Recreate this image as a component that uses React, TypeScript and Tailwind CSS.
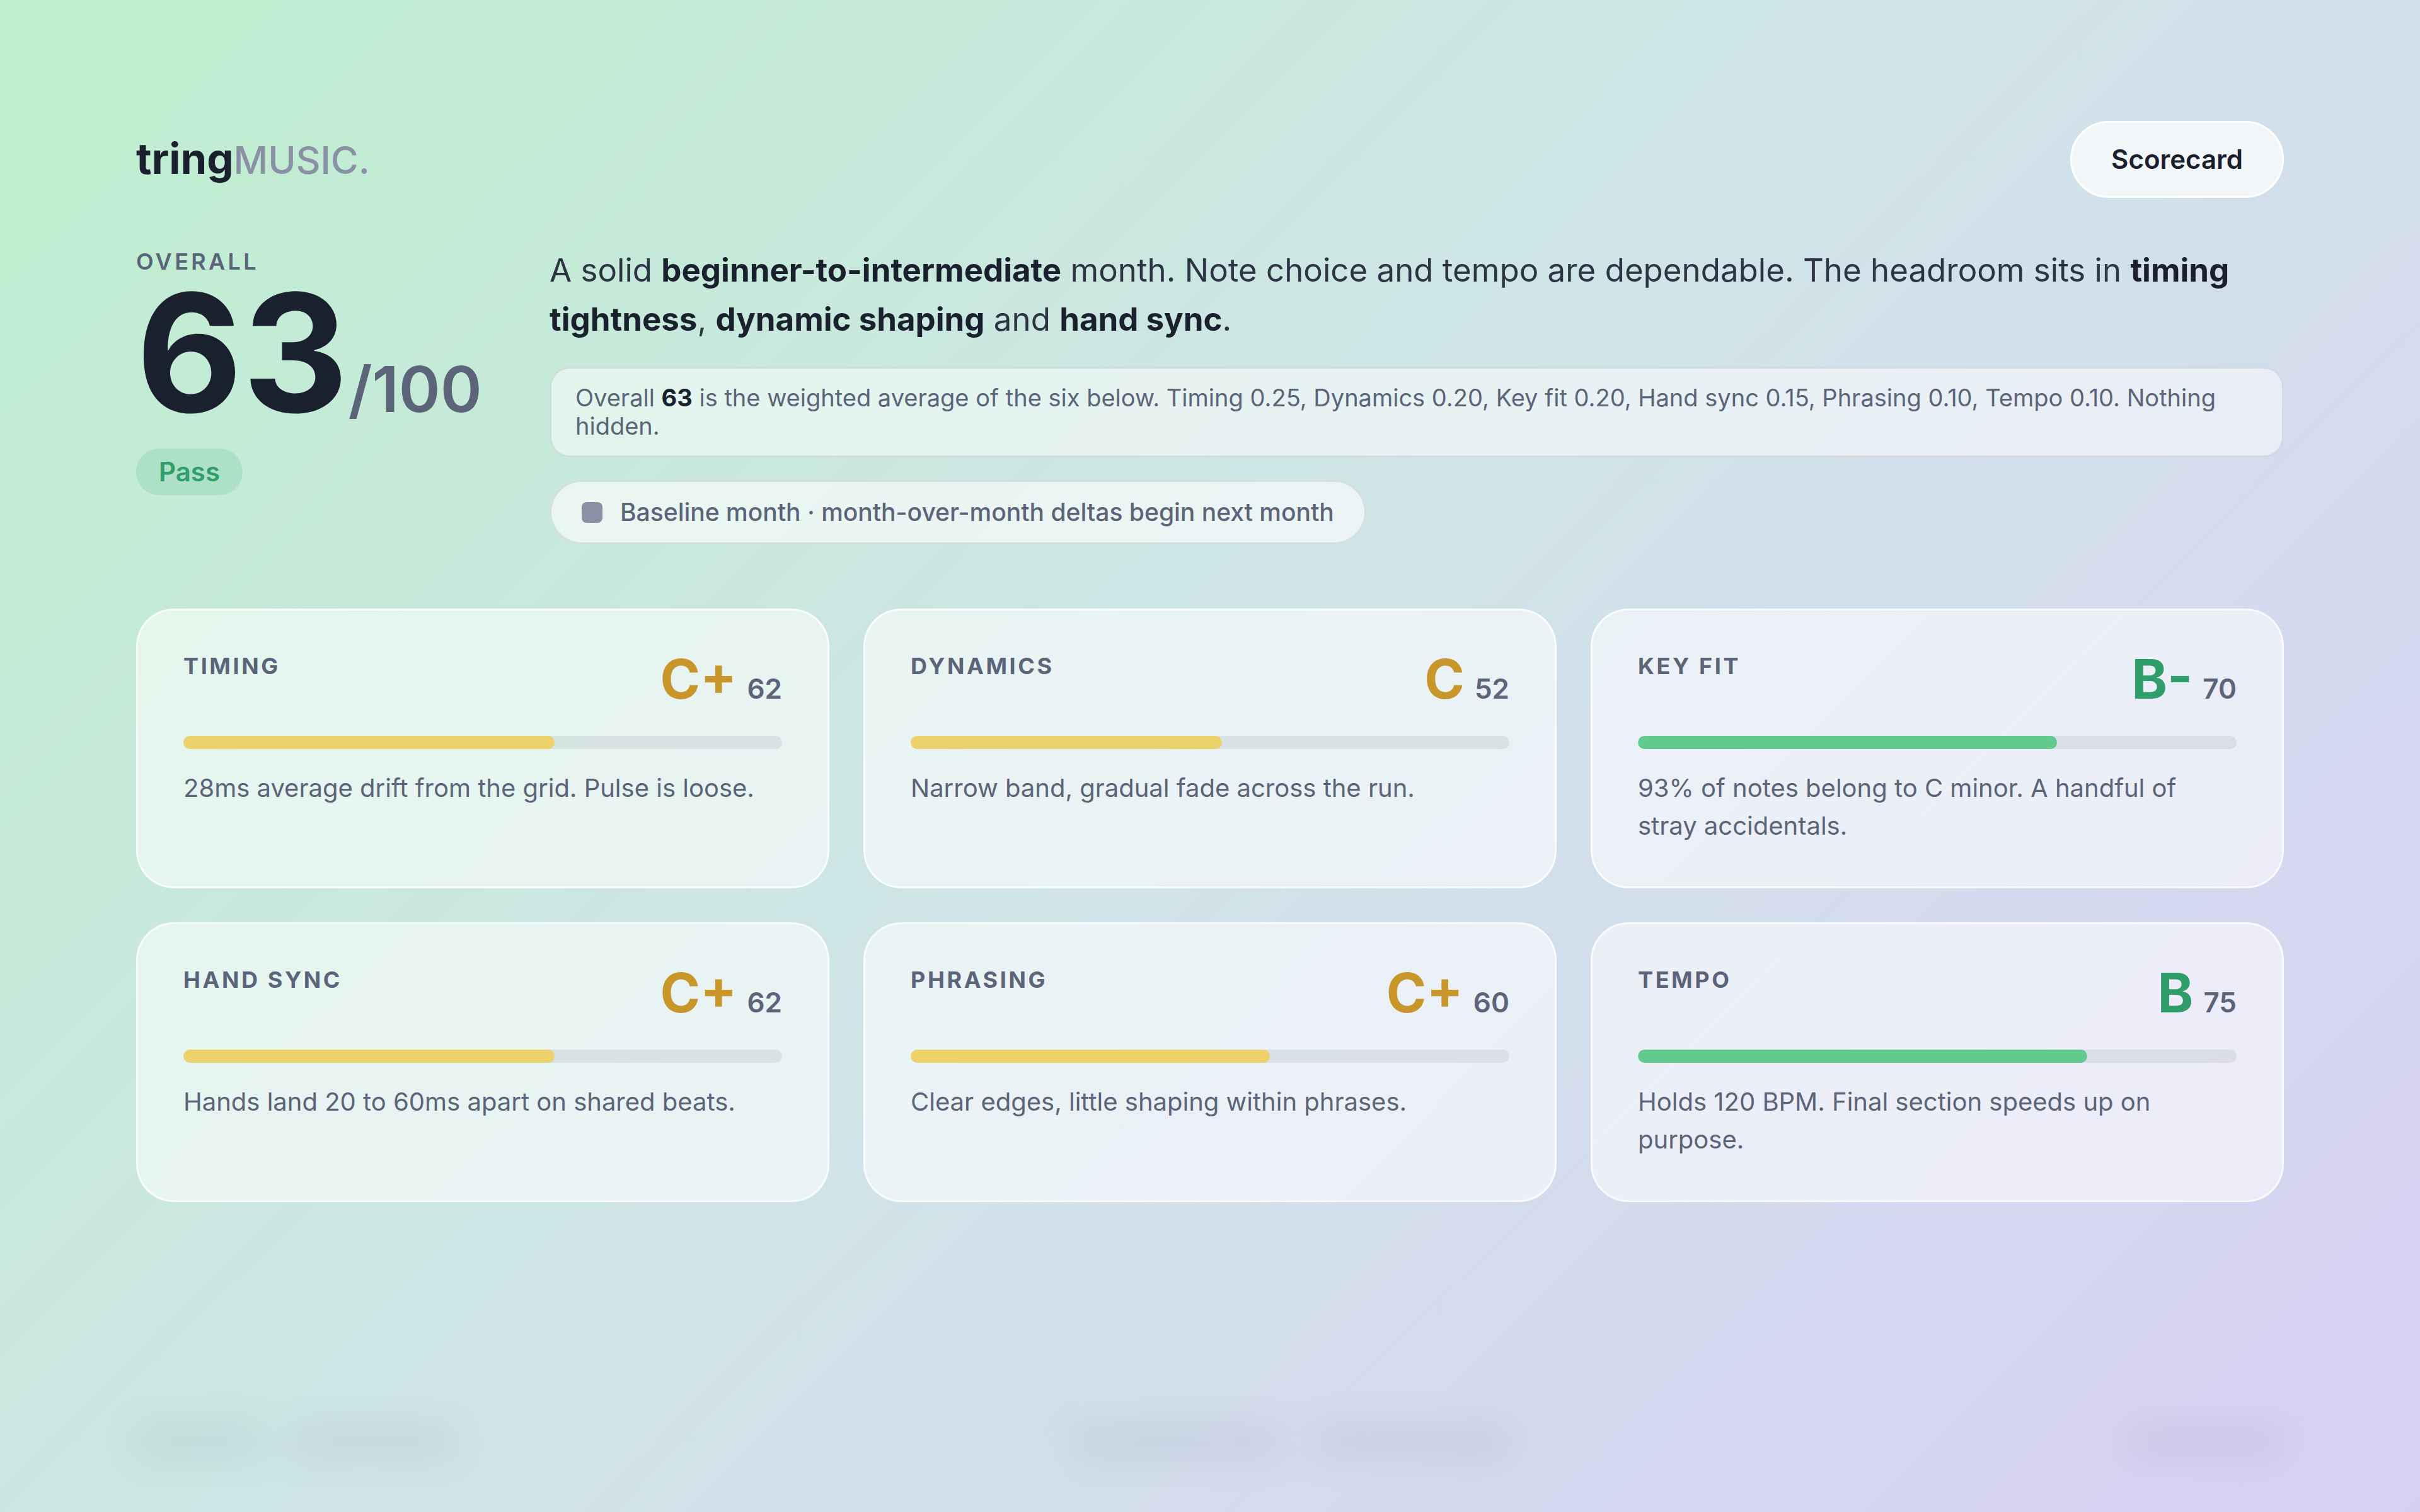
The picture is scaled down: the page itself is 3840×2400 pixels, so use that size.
import { clsx } from 'clsx';

type Tone = 'amber' | 'green';

const metrics: { label: string; grade: string; score: number; tone: Tone; note: string }[] = [
  { label: 'Timing', grade: 'C+', score: 62, tone: 'amber', note: '28ms average drift from the grid. Pulse is loose.' },
  { label: 'Dynamics', grade: 'C', score: 52, tone: 'amber', note: 'Narrow band, gradual fade across the run.' },
  { label: 'Key fit', grade: 'B-', score: 70, tone: 'green', note: '93% of notes belong to C minor. A handful of stray accidentals.' },
  { label: 'Hand sync', grade: 'C+', score: 62, tone: 'amber', note: 'Hands land 20 to 60ms apart on shared beats.' },
  { label: 'Phrasing', grade: 'C+', score: 60, tone: 'amber', note: 'Clear edges, little shaping within phrases.' },
  { label: 'Tempo', grade: 'B', score: 75, tone: 'green', note: 'Holds 120 BPM. Final section speeds up on purpose.' },
];

function MetricCard({ label, grade, score, tone, note }: (typeof metrics)[number]) {
  return (
    <article className="rounded-[60px] border-[3px] border-white/70 bg-white/55 px-[72px] pt-[67px] pb-[66px]">
      <div className="flex items-start justify-between">
        <h2 className="text-[36px] leading-[42px] font-bold uppercase tracking-widest">{label}</h2>
        <div className="flex items-baseline gap-4">
          <span
            className={clsx('text-[86px] leading-[84px] font-bold', tone === 'amber' ? 'text-[#c8962a]' : 'text-[#2f9e6b]')}
          >
            {grade}
          </span>
          <span className="text-[44px] leading-[36px] font-semibold">{score}</span>
        </div>
      </div>
      <div className="mt-12 h-[21px] overflow-hidden rounded-full bg-[#1a202e]/8">
        <div
          className={clsx('h-full rounded-full', tone === 'amber' ? 'bg-[#edd16b]' : 'bg-[#62ca8e]')}
          style={{ width: `${score}%` }}
        />
      </div>
      <p className="mt-8 text-[40px] leading-[60px]">{note}</p>
    </article>
  );
}

export default function App() {
  return (
    <div className="flex min-h-screen flex-col bg-linear-[135deg,#bdefcd,#d0e4e8_50%,#d8d0f4] px-[216px] pt-48 pb-[90px] font-['Inter',sans-serif] text-[#5b6478]">
      <header className="flex items-center justify-between">
        <a href="#" className="text-[67px] leading-[80px] font-bold text-[#1a202e]">
          tring<span className="text-[60px] font-medium text-[#8b91a5]">MUSIC.</span>
        </a>
        <button className="rounded-full border-[3px] border-white bg-white/70 px-[62px] py-8 text-[42px] leading-[52px] font-semibold text-[#1a202e]">
          Scorecard
        </button>
      </header>

      <section className="mt-[76px] grid grid-cols-[552px_1fr] items-start gap-[104px]">
        <div>
          <p className="text-[36px] leading-[50px] font-semibold uppercase tracking-[0.12em]">Overall</p>
          <p className="flex items-baseline">
            <strong className="text-[260px] leading-[240px] font-bold text-[#1a202e]">63</strong>
            <span className="text-[100px] leading-[96px] font-semibold">/100</span>
          </p>
          <p className="mt-8 w-fit rounded-full bg-[#2f9e6b]/15 px-9 text-[42px] leading-[74px] font-semibold text-[#2f9e6b]">
            Pass
          </p>
        </div>
        <div>
          <p className="text-[51px] leading-[78px] text-[#2d3444] [&>strong]:text-[#1a202e]">
            A solid <strong>beginner-to-intermediate</strong> month. Note choice and tempo are dependable. The headroom
            sits in <strong>timing tightness</strong>, <strong>dynamic shaping</strong> and <strong>hand sync</strong>.
          </p>
          <p className="mt-9 rounded-[32px] border-[3px] border-[#1a202e]/10 bg-white/50 px-[38px] py-6 text-[38px] leading-[45px]">
            Overall <strong className="text-[#1a202e]">63</strong> is the weighted average of the six below. Timing 0.25,
            Dynamics 0.20, Key fit 0.20, Hand sync 0.15, Phrasing 0.10, Tempo 0.10. Nothing hidden.
          </p>
          <p className="mt-9 flex w-fit items-center gap-7 rounded-full border-[3px] border-[#1a202e]/10 bg-white/60 px-12 text-[39px] leading-[96px] font-medium">
            <span className="size-[33px] rounded-lg bg-[#8b91a5]" />
            Baseline month · month-over-month deltas begin next month
          </p>
        </div>
      </section>

      <main className="mt-[102px] grid grid-cols-3 gap-[54px]">
        {metrics.map((m) => (
          <MetricCard key={m.label} {...m} />
        ))}
      </main>

      <footer className="mt-auto flex justify-between opacity-12 blur-[30px]" aria-hidden="true">
        <div className="flex gap-11">
          <div className="h-11 w-[200px] bg-current" />
          <div className="h-11 w-[260px] bg-current" />
        </div>
        <div className="flex gap-14">
          <div className="h-11 w-[330px] bg-current" />
          <div className="h-11 w-[310px] bg-current" />
        </div>
        <div className="h-11 w-[250px] bg-current" />
      </footer>
    </div>
  );
}
